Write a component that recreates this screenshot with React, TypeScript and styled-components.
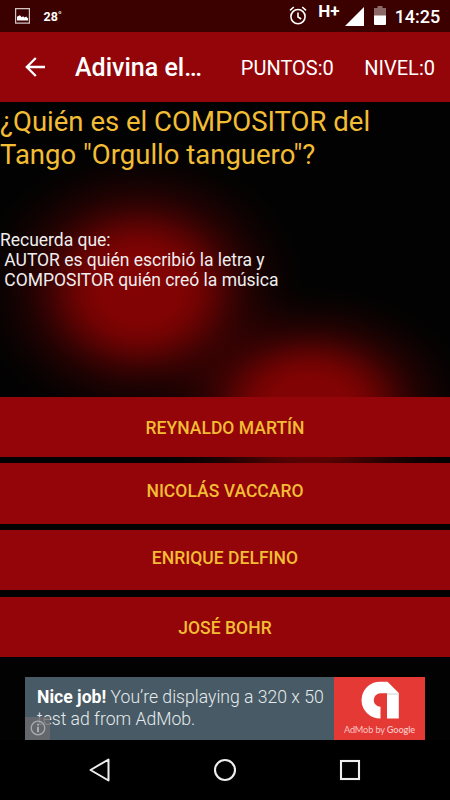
import React from 'react';
import styled, { createGlobalStyle } from 'styled-components';

const GlobalStyle = createGlobalStyle`
  * { box-sizing: border-box; }
  body { margin: 0; background: #000; font-family: Roboto, sans-serif; overflow: hidden; }
  svg { display: block; flex: none; }
`;

const Screen = styled.div`
  width: 450px;
  height: 800px;
  display: flex;
  flex-direction: column;
  overflow: hidden;
  background: #000;
`;

const StatusBar = styled.header`
  height: 32px;
  flex: none;
  display: flex;
  align-items: flex-start;
  background: #3b0000;
  color: #fff;
`;

const Temperature = styled.span`
  margin: 9px 0 0 13.5px;
  font-size: 12.5px;
  font-weight: 700;
  line-height: 15px;
`;

const StatusIcons = styled.div`
  display: flex;
  margin-left: auto;
  padding-right: 9.7px;
`;

const Network = styled.span`
  margin: 2px 0 0 11.5px;
  width: 27px;
  font-size: 17px;
  font-weight: 700;
  line-height: 18px;
`;

const Clock = styled.span`
  margin: 6px 0 0 8.4px;
  font-size: 18px;
  font-weight: 500;
  line-height: 21px;
`;

const AppBar = styled.nav`
  height: 70px;
  flex: none;
  display: flex;
  align-items: center;
  padding: 0 14px 0 25px;
  background: #930509;
  color: #fff;
`;

const Title = styled.h1`
  margin: 2px 0 0 29px;
  width: 166.5px;
  font-size: 25px;
  font-weight: 500;
  line-height: 30px;
  white-space: nowrap;
`;

const Score = styled.span<{ $width: number }>`
  width: ${(p) => p.$width}px;
  padding-top: 1px;
  font-size: 20px;
  line-height: 24px;
  white-space: nowrap;
`;

const glow = `
  rgba(131, 3, 3, 1) 0%,
  rgba(131, 3, 3, 0.98) 24%,
  rgba(131, 3, 3, 0.86) 35%,
  rgba(131, 3, 3, 0.64) 46%,
  rgba(131, 3, 3, 0.43) 55%,
  rgba(131, 3, 3, 0.24) 66%,
  rgba(131, 3, 3, 0.1) 79%,
  rgba(131, 3, 3, 0.03) 90%,
  rgba(131, 3, 3, 0) 100%`;

const Stage = styled.main`
  height: 638px;
  flex: none;
  display: flex;
  flex-direction: column;
  background:
    radial-gradient(ellipse 168px 144px at 140px 187px, ${glow}),
    radial-gradient(ellipse 166px 122px at 310px 304px, ${glow}),
    #020202;
`;

const Question = styled.h2`
  margin: 4px 0 0;
  height: 124px;
  font-size: 27.5px;
  font-weight: 400;
  line-height: 32.6px;
  color: #f2bd35;
  white-space: pre;
`;

const Reminder = styled.p`
  margin: 0;
  height: 166.6px;
  font-size: 17.5px;
  line-height: 20px;
  letter-spacing: -0.02px;
  color: #eee;
  white-space: pre;
`;

const Answers = styled.div`
  display: flex;
  flex-direction: column;
  gap: 6.2px;
  height: 260.4px;
`;

const Answer = styled.button<{ $lift: number }>`
  height: 60.5px;
  flex: none;
  border: 0;
  padding: 1.5px 0 ${(p) => p.$lift}px;
  background: #930509;
  color: #f2bd35;
  font: 500 17.5px/20px Roboto, sans-serif;
  letter-spacing: 0.03px;
`;

const Ad = styled.aside`
  position: relative;
  display: flex;
  width: 400px;
  height: 63px;
  margin: 20px auto 0;
  background: #475a65;
`;

const AdCopy = styled.div`
  width: 309px;
  padding: 9px 0 0 12px;
  font-size: 17.6px;
  font-weight: 300;
  line-height: 22px;
  color: #e6eaec;
  white-space: pre;
  b { font-weight: 700; color: #fff; }
`;

const AdInfo = styled.div`
  position: absolute;
  left: 0;
  bottom: 0;
  width: 25px;
  height: 23px;
  display: grid;
  place-items: center;
  background: rgba(107, 107, 110, 0.8);
`;

const AdBrand = styled.div`
  width: 91px;
  display: flex;
  flex-direction: column;
  align-items: center;
  padding-top: 4px;
  background: #e53935;
`;

const BrandName = styled.span`
  margin-top: 5px;
  font: 400 9.2px/12px Lato, sans-serif;
  letter-spacing: -0.14px;
  color: #f8c4c2;
  white-space: nowrap;
  b { font-weight: 600; }
`;

const NavBar = styled.footer`
  height: 60px;
  flex: none;
  display: flex;
  align-items: center;
  justify-content: center;
  gap: 101px;
  background: #000;
`;

const StatusSlot = styled.span<{ $left: number; $top: number }>`
  margin: ${(p) => p.$top}px 0 0 ${(p) => p.$left}px;
`;

const PictureIcon = () => (
  <svg width="15" height="16" viewBox="0 0 15 16">
    <path d="M.6.7h13.8v14.4H.6z" fill="none" stroke="#d4c5c5" strokeWidth="1.2" />
    <path d="M2 12.5V8.8l2.8-1.6 2 2 1.2-.9 1.6 1.1 1.6-.8 1.8 2v1.9z" fill="#fff" />
  </svg>
);

const AlarmIcon = () => (
  <svg width="18" height="19" viewBox="0 0 18 19" fill="none" stroke="#fff" strokeWidth="1.6">
    <circle cx="9" cy="10.6" r="7.1" />
    <path d="M9 6.4V11l3.2 2M1 4.3 4.8 1M17 4.3 13.2 1" />
  </svg>
);

const SignalIcon = () => (
  <svg width="19" height="19" viewBox="0 0 19 19">
    <path d="M19 0v19H0z" fill="#fff" />
  </svg>
);

const BatteryIcon = () => (
  <svg width="12" height="19" viewBox="0 0 12 19">
    <path d="M3.5 0h5v2H12v8H0V2h3.5z" fill="#8c6868" />
    <path d="M0 9.5h12V18a1 1 0 0 1-1 1H1a1 1 0 0 1-1-1z" fill="#fff" />
  </svg>
);

const BackArrow = () => (
  <svg width="21" height="20" viewBox="0 0 21 20" fill="none" stroke="#fff" strokeWidth="2.3">
    <path d="M20 10H2.2M10.8 1 1.8 10l9 9" />
  </svg>
);

const InfoIcon = () => (
  <svg width="16" height="16" viewBox="0 0 16 16">
    <circle cx="8" cy="8" r="6.8" fill="none" stroke="#a9adb0" strokeWidth="1.3" />
    <path d="M7 3.7h2v1.8H7zM7 6.8h2v5.4H7z" fill="#a9adb0" />
  </svg>
);

const AdMobLogo = () => (
  <svg width="38" height="38" viewBox="0 0 38 38">
    <path
      d="M26.5.7H19A18.5 18.5 0 0 0 .5 19 18.5 18.5 0 0 0 19.5 37.5V25.7A6.8 6.8 0 0 1 12.7 19 6.8 6.8 0 0 1 19.5 12.3H26V37.5H37.8V12Z"
      fill="#fff"
    />
    <path d="M26 12.3h11.8v1.3H26z" fill="#d9dadb" />
  </svg>
);

const answers = [
  { name: 'REYNALDO MARTÍN', lift: 0 },
  { name: 'NICOLÁS VACCARO', lift: 7 },
  { name: 'ENRIQUE DELFINO', lift: 6 },
  { name: 'JOSÉ BOHR', lift: 0 },
];

export default function App() {
  return (
    <>
      <GlobalStyle />
      <Screen>
        <StatusBar>
          <StatusSlot $left={15} $top={8}><PictureIcon /></StatusSlot>
          <Temperature>28˚</Temperature>
          <StatusIcons>
            <StatusSlot $left={0} $top={6}><AlarmIcon /></StatusSlot>
            <Network>H+</Network>
            <StatusSlot $left={0} $top={7}><SignalIcon /></StatusSlot>
            <StatusSlot $left={10} $top={6}><BatteryIcon /></StatusSlot>
            <Clock>14:25</Clock>
          </StatusIcons>
        </StatusBar>
        <AppBar>
          <BackArrow />
          <Title>Adivina el…</Title>
          <Score $width={124}>PUNTOS:0</Score>
          <Score $width={72}>NIVEL:0</Score>
        </AppBar>
        <Stage>
          <Question>{'¿Quién es el COMPOSITOR del\nTango "Orgullo tanguero"?'}</Question>
          <Reminder>{'Recuerda que:\n AUTOR es quién escribió la letra y\n COMPOSITOR quién creó la música'}</Reminder>
          <Answers>
            {answers.map((a) => (
              <Answer key={a.name} $lift={a.lift}>{a.name}</Answer>
            ))}
          </Answers>
          <Ad>
            <AdCopy><b>Nice job!</b>{" You’re displaying a 320 x 50\ntest ad from AdMob."}</AdCopy>
            <AdInfo><InfoIcon /></AdInfo>
            <AdBrand>
              <AdMobLogo />
              <BrandName>AdMob by <b>Google</b></BrandName>
            </AdBrand>
          </Ad>
        </Stage>
        <NavBar>
          <svg width="24" height="24" viewBox="0 0 24 24" fill="none" stroke="#eee" strokeWidth="2" strokeLinejoin="round">
            <path d="M20.5 1.5v21L2.5 12z" />
          </svg>
          <svg width="24" height="24" viewBox="0 0 24 24" fill="none" stroke="#eee" strokeWidth="2.1">
            <circle cx="12" cy="12" r="10" />
          </svg>
          <svg width="24" height="24" viewBox="0 0 24 24" fill="none" stroke="#eee" strokeWidth="2.1">
            <rect x="3" y="3" width="18" height="18" />
          </svg>
        </NavBar>
      </Screen>
    </>
  );
}
